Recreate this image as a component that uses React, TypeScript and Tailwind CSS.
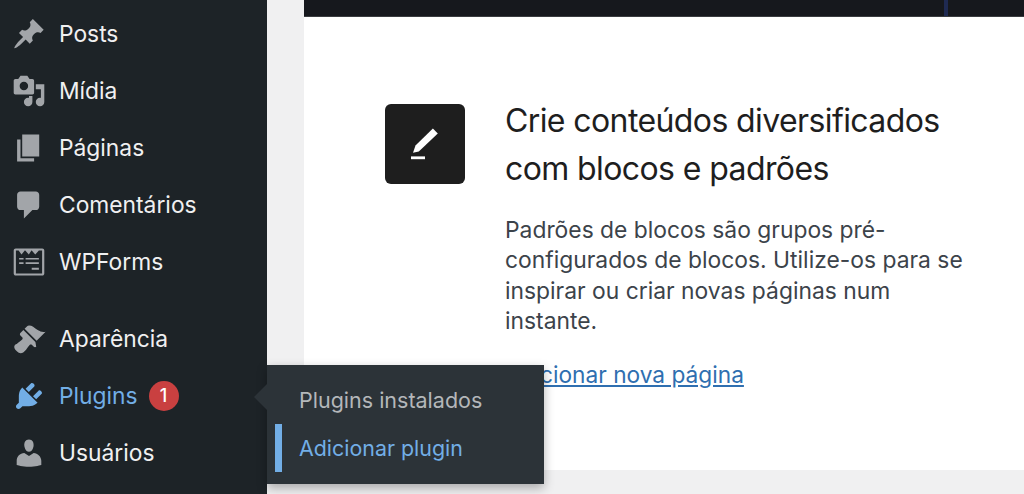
import React from 'react';

const FONT = { sans: 'font-[Inter,"Liberation_Sans",sans-serif]' };

const ICONS: Record<string, React.ReactNode> = {
    pin: <path d="M10.44 3.02l1.82-1.82 6.36 6.35-1.83 1.82c-1.05-.68-2.48-.57-3.41.36l-.75.75c-.92.93-1.04 2.35-.35 3.41l-1.83 1.82-2.41-2.41-2.8 2.79c-.42.42-3.38 2.71-3.8 2.29s1.86-3.39 2.28-3.81l2.79-2.79L4.1 9.36l1.83-1.82c1.05.69 2.48.57 3.4-.36l.75-.75c.93-.92 1.05-2.35.36-3.41z" />,
    media: <path fillRule="evenodd" d="M13 11V4c0-.55-.45-1-1-1h-1.67L9 1H5L3.67 3H2c-.55 0-1 .45-1 1v7c0 .55.45 1 1 1h10c.55 0 1-.45 1-1zM7 4.5c1.38 0 2.5 1.12 2.5 2.5S8.38 9.5 7 9.5 4.5 8.38 4.5 7 5.62 4.5 7 4.5zM14 6h5v10.5c0 1.38-1.12 2.5-2.5 2.5S14 17.88 14 16.5s1.12-2.5 2.5-2.5c.17 0 .34.02.5.05V9h-3V6zm-4 8.05V13h2v3.5c0 1.38-1.12 2.5-2.5 2.5S7 17.88 7 16.5 8.12 14 9.5 14c.17 0 .34.02.5.05z" />,
    page: <path d="M6 15V2h10v13H6zm-1 1h8v2H3V5h2v11z" />,
    comment: <path d="M5 2h9c1.1 0 2 .9 2 2v7c0 1.1-.9 2-2 2h-2l-5 5v-5H5c-1.1 0-2-.9-2-2V4c0-1.1.9-2 2-2z" />,
    forms: (
        <g>
            <path fillRule="evenodd" d="M2.2 2h15.6c.66 0 1.2.54 1.2 1.2v13.6c0 .66-.54 1.2-1.2 1.2H2.2C1.54 18 1 17.46 1 16.8V3.2C1 2.54 1.54 2 2.2 2zm.1 1.2v13.5h15.4V3.2h-1.9L13.7 5.6 11.6 3.2h-.2L9.9 5.6 7.8 3.2h-.3L5.6 5.6 3.9 3.2H2.3z" />
            <path d="M4.2 7.6h2.6v1H4.2zM8 7.6h7.8v1H8zM4.2 10.2h2.6v1H4.2zM8 10.2h7.8v1H8zM11.6 13.4h4.2v1.1h-4.2z" />
        </g>
    ),
    brush: <path d="M14.48 11.06L7.41 3.99l1.5-1.5c.5-.56 2.3-.47 3.51.32 1.21.8 1.43 1.28 2.91 2.1 1.18.64 2.45 1.26 4.45.85zm-.71.71L6.7 4.7 4.93 6.47c-.39.39-.39 1.02 0 1.41l1.06 1.06c.39.39.39 1.03 0 1.42-.6.6-1.43 1.11-2.21 1.69-.35.26-.7.53-1.01.84C1.43 13.23.4 14.8 2.7 17.1s3.8 1.04 5.14-.35c.3-.3.58-.65.84-1 .58-.79 1.11-1.61 1.69-2.21.39-.39 1.02-.39 1.41 0l1.06 1.06c.39.39 1.02.39 1.41 0z" />,
    plug: <path d="M13.11 4.36L9.87 7.6 8 5.73l3.24-3.24c.35-.34 1.05-.2 1.56.32.52.51.66 1.21.31 1.55zm-8 1.77l.91-1.12 9.01 9.01-1.19.84c-.71.71-2.63 1.16-3.82 1.16H6.14L4.9 17.26c-.59.59-1.54.59-2.12 0-.59-.58-.59-1.53 0-2.12l1.24-1.24v-3.88c0-1.13.4-3.19 1.09-3.89zm7.26 3.97l3.24-3.24c.34-.35 1.04-.21 1.55.31.52.51.66 1.21.31 1.55l-3.24 3.25z" />,
    user: <path d="M10 9.25c-2.27 0-2.73-3.44-2.73-3.44C7 4.02 7.82 2 9.97 2c2.16 0 2.98 2.02 2.71 3.81 0 0-.41 3.44-2.68 3.44zm0 2.57L12.72 10c2.39 0 4.52 2.33 4.52 4.53v2.49s-3.65 1.13-7.24 1.13c-3.65 0-7.24-1.13-7.24-1.13v-2.49c0-2.25 1.94-4.48 4.47-4.48z" />,
};

const MenuItem = ({ icon, label, active, badge }: { icon: string; label: string; active?: boolean; badge?: string }) => (
    <div className="flex items-center h-[57px] pl-3">
        <svg viewBox="0 0 20 20" className={`w-[34px] h-[34px] shrink-0 ${active ? 'fill-[#72aee6]' : 'fill-[#a2a5a9]'}`}>
            {ICONS[icon]}
        </svg>
        <span className={`ml-[13px] pt-[2px] text-[22.8px] ${active ? 'text-[#72aee6]' : 'text-[#f0f0f1]'}`}>{label}</span>
        {badge && (
            <span className="ml-[11px] w-[30px] h-[30px] rounded-full bg-[#c94040] text-white text-[18px] font-medium flex items-center justify-center">
                {badge}
            </span>
        )}
    </div>
);

export default function App() {
    return (
        <div className={`relative w-[1024px] h-[494px] overflow-hidden flex bg-[#f0f0f1] ${FONT.sans}`}>
            {/* 侧边栏 */}
            <aside className="w-[267px] shrink-0 bg-[#1d2327] pt-[5px]">
                <MenuItem icon="pin" label="Posts" />
                <MenuItem icon="media" label="Mídia" />
                <MenuItem icon="page" label="Páginas" />
                <MenuItem icon="comment" label="Comentários" />
                <MenuItem icon="forms" label="WPForms" />
                <div className="h-5" />
                <MenuItem icon="brush" label="Aparência" />
                <MenuItem icon="plug" label="Plugins" active badge="1" />
                <MenuItem icon="user" label="Usuários" />
            </aside>

            {/* 内容区 */}
            <main className="flex-1 pl-[37px]">
                <div className="h-[17px] bg-[#16181d] border-b border-[#3a3c40]">
                    <div className="ml-[640px] w-1 h-full bg-[#1f2a52]" />
                </div>
                <div className="h-[453px] bg-white flex pl-[81px] pt-[87px] gap-10">
                    <div className="w-20 h-20 shrink-0 rounded-[6px] bg-[#1e1e1e]">
                        <svg viewBox="0 0 80 80" className="w-20 h-20 fill-white">
                            <path d="M47.9 24.5L52.8 29.4 33.8 47.5 28 48.7 30.5 41.5z" />
                            <rect x="26" y="52.4" width="14" height="2.8" />
                        </svg>
                    </div>
                    <div className="w-[478px] -mt-[7px]">
                        <h1 className="text-[32px] leading-[48px] tracking-[-0.6px] text-[#1e1e1e]">
                            Crie conteúdos diversificados
                            <br />
                            com blocos e padrões
                        </h1>
                        <p className="mt-[22px] text-[22.85px] leading-[30.3px] text-[#3c434a]">
                            Padrões de blocos são grupos pré-
                            <br />
                            configurados de blocos. Utilize-os para se
                            <br />
                            inspirar ou criar novas páginas num
                            <br />
                            instante.
                        </p>
                        <a className="block mt-[24px] text-[22.7px] leading-[30px] text-[#2f6fb0] underline">Adicionar nova página</a>
                    </div>
                </div>
            </main>

            {/* 弹出子菜单 */}
            <div className="absolute left-[267px] top-[365px] w-[277px] h-[119px] bg-[#2c3338] shadow-[0_4px_10px_rgba(0,0,0,0.3)] pt-[11px]">
                <div className="absolute -left-[13px] top-[19px] w-0 h-0 border-y-[13px] border-y-transparent border-r-[13px] border-r-[#2c3338]" />
                <div className="h-[48px] flex items-center pl-8 text-[21.5px] text-[#b4b7ba]">Plugins instalados</div>
                <div className="relative h-[48px] flex items-center pl-8 text-[21.4px] text-[#72aee6]">
                    <span className="absolute left-2 top-0 bottom-0 w-[7px] bg-[#72aee6]" />
                    Adicionar plugin
                </div>
            </div>
        </div>
    );
}
